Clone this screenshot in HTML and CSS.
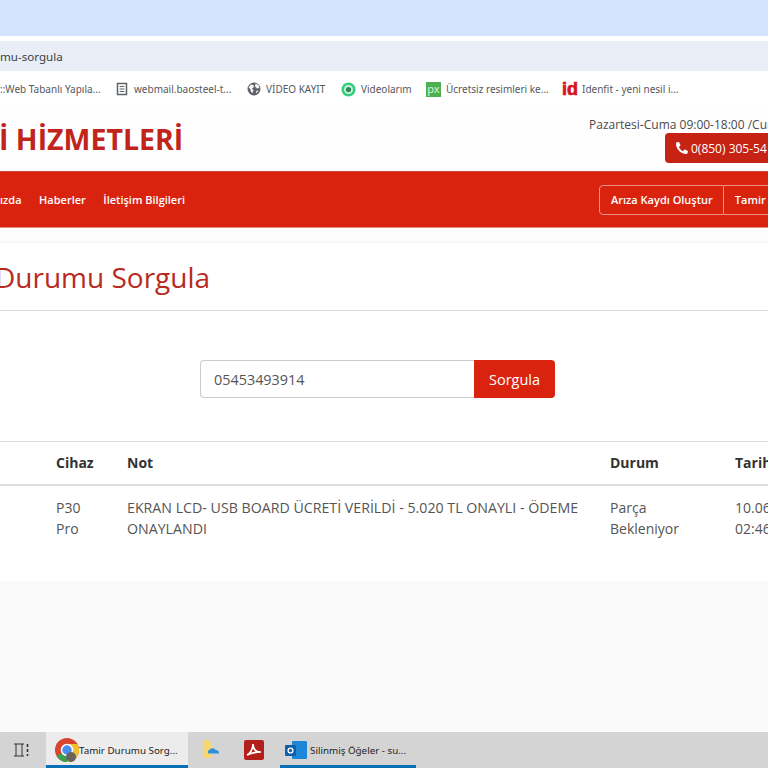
FILE: index.html
```html
<!DOCTYPE html>
<html lang="tr">
<head>
<meta charset="utf-8">
<title>Tamir Durumu Sorgula</title>
<link rel="stylesheet" href="styles.css">
</head>
<body>
<div class="screen">
  <div class="tabstrip"></div>
  <div class="toolbar"><div class="address"><span class="url">mu-sorgula</span></div></div>
  <div class="bookmarks">
    <span class="bm bm-first">::Web Tabanlı Yapıla...</span>
    <span class="bm bm-mail"><svg class="bm-icon" viewBox="0 0 14 14"><path d="M2.500 1.500h9v11h-9z" fill="none" stroke="#5f6368" stroke-width="1.500"/><path d="M4.600 4.500h4.800M4.600 7h4.800M4.600 9.500h4.800" stroke="#5f6368"/></svg>webmail.baosteel-t...</span>
    <span class="bm bm-video"><svg class="bm-icon" viewBox="0 0 14 14"><circle cx="7" cy="7" r="6.500" fill="#5f6368"/><path d="M1.500 5l2.500-2.500 2.500.5.500 2-2 1.500 1.500 2-1 2.500-1.500-1-.5-2.500zM8.500 1.500l3 1.500 1 3-2.500.5-2-2zM9 9l2.500-.5-2 3z" fill="#f4f4f4"/></svg>VİDEO KAYIT</span>
    <span class="bm bm-own"><svg class="bm-icon" viewBox="0 0 16 16"><circle cx="8" cy="8" r="7.500" fill="#2fd07c"/><circle cx="8" cy="8" r="4.800" fill="#cfeedd"/><circle cx="8" cy="8" r="2.800" fill="#2a8a56"/></svg>Videolarım</span>
    <span class="bm bm-px"><span class="px-logo">px</span>Ücretsiz resimleri ke...</span>
    <span class="bm bm-id"><span class="id-logo">id</span>Idenfit - yeni nesil i...</span>
  </div>
  <main class="site">
    <header class="masthead">
      <div class="brand">İ HİZMETLERİ</div>
      <div class="contact">
        <div class="hours">Pazartesi-Cuma 09:00-18:00 /Cumartesi 09:00-14:00</div>
        <a class="phone"><svg class="phone-icon" viewBox="0 0 24 24"><path d="M23 17.500l-5.200-2.300c-.5-.2-1-.1-1.400.3l-2.300 2.800C10.500 16.400 7.600 13.500 5.700 9.900l2.800-2.300c.4-.3.5-.9.3-1.400L6.500 1C6.200.4 5.600.1 5 .2L.9 1.200C.4 1.300 0 1.800 0 2.400 0 14.300 9.700 24 21.600 24c.6 0 1.100-.4 1.200-.9l1-4.100c.1-.6-.2-1.200-.8-1.500z" fill="#fff"/></svg>0(850) 305-54 44</a>
      </div>
    </header>
    <nav class="navbar">
      <div class="nav-links">
        <a class="nav-link nav-cut">ızda</a>
        <a class="nav-link">Haberler</a>
        <a class="nav-link">İletişim Bilgileri</a>
      </div>
      <div class="nav-actions">
        <a class="nav-btn">Arıza Kaydı Oluştur</a>
        <a class="nav-btn nav-btn-last">Tamir Durumu Sorgula</a>
      </div>
    </nav>
    <div class="gap"></div>
    <section class="content">
      <h1 class="title">Durumu Sorgula</h1>
      <form class="search">
        <div class="field">05453493914</div>
        <button class="submit" type="button">Sorgula</button>
      </form>
      <div class="table">
        <div class="row row-head">
          <div class="cell cell-device">Cihaz</div>
          <div class="cell cell-note">Not</div>
          <div class="cell cell-state">Durum</div>
          <div class="cell cell-date">Tarih</div>
        </div>
        <div class="row row-body">
          <div class="cell cell-device">P30<br>Pro</div>
          <div class="cell cell-note">EKRAN LCD- USB BOARD ÜCRETİ VERİLDİ - 5.020 TL ONAYLI - ÖDEME ONAYLANDI</div>
          <div class="cell cell-state">Parça<br>Bekleniyor</div>
          <div class="cell cell-date">10.06.2023<br>02:46</div>
        </div>
      </div>
    </section>
    <div class="footer-space"></div>
  </main>
  <div class="taskbar">
    <span class="task-view"><svg viewBox="0 0 18 14" class="tv-icon"><path d="M1 1h10M1 13h10M3 1v12M9 1v12" stroke="#333" fill="none"/><path d="M14.500 1v3M14.500 6v3M14.500 11v2" stroke="#333" stroke-width="1.600"/></svg></span>
    <span class="task task-active task-chrome"><svg class="chrome" viewBox="0 0 24 24"><circle cx="12" cy="12" r="12" fill="#d9442f"/><path d="M12 12L1.600 18A12 12 0 0 0 12 24z" fill="#3a9f50"/><path d="M12 12V24A12 12 0 0 0 22.400 6H12z" fill="#f2c031"/><circle cx="12" cy="12" r="5.500" fill="#4a8cf0" stroke="#fff" stroke-width="1.500"/><circle cx="16" cy="19" r="5" fill="#6a625c"/></svg>Tamir Durumu Sorg...</span>
    <span class="task-icon task-files"><svg viewBox="0 0 20 24" class="files"><path d="M1 1h7l2 3v17H1z" fill="#f7d774"/><path d="M8 12c3-3 6-2 7 0 3 0 4 2 4 4H7c-1-2 0-4 1-4z" fill="#2f8fd8"/></svg></span>
    <span class="task-icon task-pdf"><svg viewBox="0 0 20 20" class="pdf"><rect width="20" height="20" rx="2" fill="#b3201c"/><path d="M3 15c3-1 6-6 6-11 0 5 3 8 8 8-5 0-10 1-14 3z" fill="none" stroke="#fff" stroke-width="1.600"/></svg></span>
    <span class="task task-active task-mail"><svg class="outlook" viewBox="0 0 22 20"><rect x="7" y="1" width="15" height="18" rx="1" fill="#1b87d6"/><rect x="0" y="5" width="11" height="11" rx="1" fill="#0f5fa8"/><circle cx="5.500" cy="10.500" r="2.400" fill="none" stroke="#fff" stroke-width="1.400"/></svg>Silinmiş Öğeler - su...</span>
  </div>
</div>
</body>
</html>
```
FILE: styles.css
```css
* { box-sizing: border-box; }
html, body { margin: 0; padding: 0; }
body { width: 768px; height: 768px; overflow: hidden; font-family: "Open Sans", sans-serif; background: #fff; color: #555; }
.screen { width: 768px; height: 768px; overflow: hidden; display: flex; flex-direction: column; }

.tabstrip { height: 36px; background: #d3e3fd; flex: none; }
.toolbar { height: 35px; padding-top: 5px; background: #fff; flex: none; }
.address { height: 30px; background: #e9eef6; display: flex; align-items: center; }
.url { font: 11.600px "Noto Sans", sans-serif; color: #3c4043; }

.bookmarks { height: 36px; flex: none; display: flex; align-items: center; font: 10px "Noto Sans", sans-serif; color: #55585c; white-space: nowrap; background: #fff; }
.bm { display: flex; align-items: center; flex: none; }
.bm-icon { width: 14px; height: 14px; margin-right: 5px; flex: none; }
.bm-first { width: 115px; }
.bm-mail { width: 132px; }
.bm-video { width: 94px; }
.bm-own { width: 85px; }
.bm-own .bm-icon { width: 15px; height: 15px; }
.bm-px { width: 136px; }
.px-logo { width: 15px; height: 15px; margin-right: 5px; background: #4caf50; color: #d8f2d8; font: 11px/14px "Noto Sans", sans-serif; text-align: center; }
.id-logo { width: 15px; margin-right: 5px; color: #d8121f; font: 700 18px/15px "Liberation Sans", sans-serif; -webkit-text-stroke: 0.7px #d8121f; }

.site { flex: 1; display: flex; flex-direction: column; min-height: 0; background: #fafafa; }
.masthead { height: 64px; flex: none; background: #fefefe; display: flex; white-space: nowrap; }
.brand { width: 590px; padding-top: 12px; margin-left: -1px; font-size: 28.500px; line-height: 40px; font-weight: 700; color: #c0241a; flex: none; }
.contact { flex: none; padding-top: 10px; }
.hours { font-size: 12px; line-height: 16px; color: #4a4a4a; }
.phone { display: inline-flex; align-items: center; height: 30px; margin: 0 0 0 76px; padding: 0 8px 0 11px; background: #c72315; color: #fff; border-radius: 4px; font-size: 12px; font-weight: 500; }
.phone-icon { width: 12px; height: 12px; margin-right: 3px; }

.navbar { height: 57px; flex: none; background: #d9230f; display: flex; align-items: center; white-space: nowrap; color: #fff; font-size: 11px; font-weight: 600; border-top: 1px solid #c9493a; border-bottom: 1px solid #e88f84; }
.nav-links { width: 599px; flex: none; display: flex; }
.nav-link { color: #fff; margin-right: 17.500px; }
.nav-cut { margin-left: 0; }
.nav-actions { display: flex; flex: none; }
.nav-btn { height: 30px; line-height: 28px; padding: 0 10px 0 11px; border: 1px solid #eb9288; color: #fff; }
.nav-btn:first-child { border-radius: 4px 0 0 4px; }
.nav-btn-last { border-left: 0; }

.gap { height: 15px; flex: none; background: #fcfcfc; border-bottom: 1px solid #f4f4f4; }
.content { height: 338px; flex: none; background: #fff; display: flex; flex-direction: column; }
.title { margin: 0 0 0 -5px; height: 68px; border-bottom: 1px solid #dcdcdc; font-size: 28px; line-height: 68px; font-weight: 400; color: #b82a1e; white-space: nowrap; }

.search { display: flex; margin: 49px 0 0 200px; width: 355px; height: 38px; flex: none; }
.field { flex: 1; border: 1px solid #ccc; border-right: 0; border-radius: 4px 0 0 4px; font-size: 14.400px; line-height: 37px; padding-left: 13px; color: #555; background: #fff; }
.submit { width: 81px; border: 0; background: #d9230f; color: #fff; border-radius: 0 4px 4px 0; font: 14.500px "Open Sans", sans-serif; padding: 0; }

.table { margin-top: 43px; border-top: 1px solid #ddd; flex: none; width: 900px; }
.row { display: grid; grid-template-columns: 56px 71px 483px 125px 165px; }
.row-head { height: 44px; border-bottom: 2px solid #ddd; font-size: 14px; font-weight: 700; color: #333; line-height: 42px; }
.row-body { font-size: 14px; line-height: 21px; padding-top: 10.500px; color: #555; }
.cell-device { grid-column: 2; }
.row-body .cell-note { padding-right: 20px; font-size: 14.200px; }

.footer-space { flex: 1; background: #fafafa; }

.taskbar { height: 36px; flex: none; background: #d4d4d4; display: flex; align-items: stretch; font: 9.800px "Noto Sans", sans-serif; color: #222; white-space: nowrap; }
.task-view { width: 46px; padding-right: 2px; display: flex; align-items: center; justify-content: center; }
.tv-icon { width: 18px; height: 14px; }
.task { display: flex; align-items: center; padding-top: 3px; }
.task-active { border-bottom: 3px solid #0a70b5; }
.chrome { width: 24px; height: 24px; margin: 0 0 0 9px; flex: none; }
.task-chrome { width: 142px; background: #ececec; }
.task-icon { display: flex; align-items: center; justify-content: center; }
.task-files { width: 46px; }
.files { width: 18px; height: 22px; }
.task-pdf { width: 40px; margin-right: 6px; }
.pdf { width: 20px; height: 20px; }
.task-mail { width: 136px; }
.outlook { width: 22px; height: 20px; margin: 0 3px 0 5px; flex: none; }
```
